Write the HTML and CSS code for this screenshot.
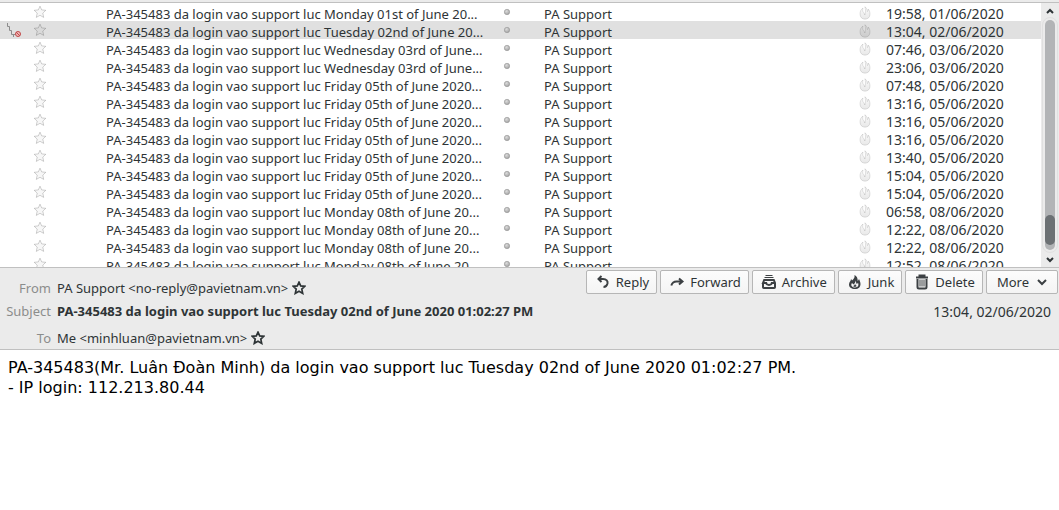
FILE: index.html
```html
<!DOCTYPE html>
<html lang="vi">
<head>
    <meta charset="UTF-8">
    <title>Mail</title>
    <link rel="stylesheet" href="styles.css">
</head>

<body>
    <svg class="defs" aria-hidden="true">
        <defs>
            <linearGradient id="flame-fill" x1="0" y1="0" x2="0" y2="1">
                <stop offset="0" stop-color="#000" stop-opacity="0.02" />
                <stop offset="1" stop-color="#000" stop-opacity="0.09" />
            </linearGradient>
            <radialGradient id="dot-fill" cx="0.4" cy="0.35" r="0.65">
                <stop offset="0" stop-color="#dcdcdc" />
                <stop offset="1" stop-color="#a2a2a2" />
            </radialGradient>
        </defs>
        <symbol id="star" viewBox="0 0 14 14">
            <path d="M7 1.2 8.700 4.900 12.800 5.300 9.800 8.100 10.700 12.400 7 10.300 3.300 12.400 4.200 8.100 1.200 5.300 5.300 4.900Z" />
        </symbol>
        <symbol id="flame" viewBox="0 0 12 14">
            <path d="M4 2C1.800 3.500 1 5.500 1 8 1 11.200 3.200 13.200 6 13.200 9 13.200 11 11.200 11 8 11 5.800 10.300 4 9.200 3 9.300 4.200 9 5 8.400 5.600 8.300 3.500 7.500 1.600 5.800.8 6.600 3 6.500 5 6.200 7L5.800 9C5.400 7.500 4.800 7 4.200 6.200 3.600 5 3.600 3.500 4 2Z" />
        </symbol>
    </svg>

    <div class="toolbar-edge"></div>
    <div class="thread-pane">
        <div class="thread-list">
            <table>
                <colgroup>
                    <col class="col-thread"><col class="col-star"><col class="col-attach"><col class="col-subject">
                    <col class="col-read"><col class="col-from"><col class="col-junk"><col class="col-date">
                </colgroup>
                <tbody id="rows"></tbody>
            </table>
        </div>
        <div class="scrollbar">
            <button class="scroll-button" aria-label="Scroll up"><svg viewBox="0 0 8 6"><path d="M1 5 4 2 7 5" /></svg></button>
            <div class="track"><div class="thumb"></div></div>
            <button class="scroll-button" aria-label="Scroll down"><svg viewBox="0 0 8 6"><path d="M1 1 4 4 7 1" /></svg></button>
        </div>
    </div>

    <div class="message-header">
        <div class="actions">
            <button><svg class="icon line" viewBox="0 0 16 16"><path d="M6.500 2 3.500 5 6.500 8M3.500 5H8C11.500 5 13 7 12.500 9.500 12 11.500 10.500 13 8.500 13" /></svg>Reply</button>
            <button><svg class="icon line" viewBox="0 0 16 16"><path d="M10 4.500 13.500 7.500 10 10.500M13 7.500H7.500C4.500 7.500 3 9.300 2.300 11.500" /></svg>Forward</button>
            <button><svg class="icon line" viewBox="0 0 16 16"><path class="thin" d="M4.500 1.500H11.500M3.500 3.500H12.500" /><path d="M2 9V13.200Q2 14 2.800 14H13.200Q14 14 14 13.200V9L12.800 6H3.200L2 9H5.200C5.500 11.500 10.500 11.500 10.800 9H14" /></svg>Archive</button>
            <button><svg class="icon line" viewBox="0 0 16 16"><path class="solid" fill-rule="evenodd" d="M7.500 1C8 4 6.500 5 5 6.500 4.800 5.800 4.600 5.500 4 5 4.200 7 2 8 2 10.500 2 13.300 4.500 15 8 15 11.500 15 13.500 13 13.500 10 13.500 7.500 12.500 6.500 12 5 11.500 6 11.200 6.500 10.700 7 10.800 4 9.800 2 7.500 1ZM8.500 6.500C9 8.500 9.500 9 9.800 10.300L11 8.800C12 11.500 11 13.500 8 13.500 4.500 13.500 3.500 11 5 9L6.500 10.500C7.500 9.500 8.500 8.500 8.500 6.500Z" /><path class="solid" d="M8 9.500C8.200 10.800 9 11.200 9.800 12L8 13 6 12.200C7 11.500 7.800 11 8 9.500Z" /></svg>Junk</button>
            <button><svg class="icon line" viewBox="0 0 16 16"><path d="M2 3.500H14M5.500 3V1.500H10.500V3M3.500 5V13Q3.500 14.500 5 14.500H11Q12.500 14.500 12.500 13V5" /><path class="thin" d="M6 5.500V12.500M8 5.500V12.500M10 5.500V12.500" /></svg>Delete</button>
            <button class="more">More<svg class="chevron line" viewBox="0 0 10 8"><path d="M1 2 5 6 9 2" /></svg></button>
        </div>
        <div class="field from">
            <span class="label">From</span>
            <span>PA Support &lt;no-reply@pavietnam.vn&gt;</span>
            <button class="contact-star" aria-label="Add to contacts"><svg><use href="#star" /></svg></button>
        </div>
        <div class="field">
            <span class="label">Subject</span>
            <strong>PA-345483 da login vao support luc Tuesday 02nd of June 2020 01:02:27 PM</strong>
            <time>13:04, 02/06/2020</time>
        </div>
        <div class="field to">
            <span class="label">To</span>
            <span>Me &lt;minhluan@pavietnam.vn&gt;</span>
            <button class="contact-star" aria-label="Add to contacts"><svg><use href="#star" /></svg></button>
        </div>
    </div>

    <div class="message-body">
        PA-345483(Mr. Luân Đoàn Minh) da login vao support luc Tuesday 02nd of June 2020 01:02:27 PM.<br>
        - IP login: 112.213.80.44
    </div>
    <script src="script.js"></script>
</body>
</html>
```

FILE: styles.css
```css
body {
    font-family: "Noto Sans", sans-serif;
    font-size: 13px;
    color: #2e3436;
    background-color: #fff;
    margin: 0;
}

button {
    display: block;
    font: inherit;
    color: inherit;
    padding: 0;
    border: none;
    background: none;
}

svg {
    display: block;
    fill: none;
}

.defs {
    position: absolute;
    width: 0;
    height: 0;
}

.toolbar-edge {
    height: 2px;
    background-color: #ebebeb;
    border-bottom: 1px solid #c0c0c0;
}

/* message list */
.thread-pane {
    display: flex;
    height: 264px;
}

.thread-list {
    flex: 1;
    overflow: hidden;
}

table {
    width: 100%;
    table-layout: fixed;
    border-collapse: collapse;
}

.col-thread { width: 28px; }
.col-star { width: 24px; }
.col-attach { width: 54px; }
.col-subject { width: 392px; }
.col-read { width: 46px; }
.col-junk { width: 27px; }
.col-date { width: 155px; }

td {
    height: 18px;
    padding: 0;
    vertical-align: top;
    white-space: nowrap;
}

td .text {
    display: block;
    height: 18px;
    line-height: 22px;
}

td .date,
.field time {
    font-size: 14px;
}

.selected {
    background-color: #e0e0e0;
}

.thread-icon {
    width: 16px;
    height: 16px;
    margin: 1px 0 0 6px;
}

.row-star svg {
    width: 14px;
    height: 14px;
    margin: 2px 5px 0;
    stroke: rgba(0, 0, 0, 0.18);
    fill: rgba(0, 0, 0, 0.03);
}

.row-dot svg {
    width: 8px;
    height: 8px;
    margin: 5px 5px 0;
}

.row-junk svg {
    width: 12px;
    height: 14px;
    margin-top: 3px;
    fill: url(#flame-fill);
    stroke: rgba(0, 0, 0, 0.14);
    stroke-width: 0.8;
}

/* scrollbar */
.scrollbar {
    display: flex;
    flex-direction: column;
    width: 18px;
    background-color: #ebebeb;
}

.scroll-button {
    display: flex;
    justify-content: center;
    align-items: center;
    height: 15px;
}

.scroll-button svg {
    width: 8px;
    height: 6px;
    stroke: #2e3436;
    stroke-width: 2;
}

.track {
    display: flex;
    align-items: flex-end;
    flex: 1;
    width: 10px;
    margin: 2px auto;
    padding-bottom: 5px;
    box-sizing: border-box;
    border-radius: 5px;
    background-color: #b2b4b6;
    outline: 1px solid #e0e0e0;
    outline-offset: 2px;
}

.thumb {
    width: 10px;
    height: 30px;
    border-radius: 5px;
    background-color: #6c7174;
}

/* message header */
.message-header {
    position: relative;
    background-color: #ebebeb;
    border-top: 1px solid #c0c0c0;
    border-bottom: 1px solid #c0c0c0;
    padding: 11px 8px 2px 6px;
}

.actions {
    position: absolute;
    top: 2px;
    right: 1px;
    display: flex;
    gap: 3px;
}

.actions button {
    display: flex;
    align-items: center;
    gap: 5px;
    height: 24px;
    box-sizing: border-box;
    padding: 0 7px 0 8px;
    border: 1px solid #b6b6b6;
    border-radius: 2px;
    background-image: linear-gradient(#fcfcfc, #f4f4f4);
}

.actions .more {
    gap: 8px;
    padding: 0 10px;
}

.icon {
    width: 16px;
    height: 16px;
}

.chevron {
    width: 10px;
    height: 8px;
}

.line {
    stroke: #3c4043;
    stroke-width: 2;
}

.thin {
    stroke-width: 1;
}

.solid {
    fill: #3c4043;
    stroke: none;
}

.field {
    display: flex;
    align-items: center;
    height: 18px;
    margin-bottom: 5px;
}

.field.to {
    margin: 9px 0 0;
}

.label {
    width: 45px;
    margin-right: 6px;
    text-align: right;
    color: #8b8d8c;
}

.field time {
    margin-left: auto;
}

.contact-star {
    margin-left: 4px;
}

.contact-star svg {
    width: 14px;
    height: 14px;
    stroke: #2e3436;
    stroke-width: 1.7;
}

/* message text */
.message-body {
    font-family: "DejaVu Sans", sans-serif;
    font-size: 16px;
    line-height: 20px;
    color: #000;
    padding: 8px;
}
```

FILE: script.js
```js
const messages = [
    ['Monday 01st of June 20...', '19:58, 01/06/2020'],
    ['Tuesday 02nd of June 20...', '13:04, 02/06/2020'],
    ['Wednesday 03rd of June...', '07:46, 03/06/2020'],
    ['Wednesday 03rd of June...', '23:06, 03/06/2020'],
    ['Friday 05th of June 2020...', '07:48, 05/06/2020'],
    ['Friday 05th of June 2020...', '13:16, 05/06/2020'],
    ['Friday 05th of June 2020...', '13:16, 05/06/2020'],
    ['Friday 05th of June 2020...', '13:16, 05/06/2020'],
    ['Friday 05th of June 2020...', '13:40, 05/06/2020'],
    ['Friday 05th of June 2020...', '15:04, 05/06/2020'],
    ['Friday 05th of June 2020...', '15:04, 05/06/2020'],
    ['Monday 08th of June 20...', '06:58, 08/06/2020'],
    ['Monday 08th of June 20...', '12:22, 08/06/2020'],
    ['Monday 08th of June 20...', '12:22, 08/06/2020'],
    ['Monday 08th of June 20...', '12:52, 08/06/2020']
];
const selected = 1;

const threadIcon = `<svg class="thread-icon" viewBox="0 0 16 16">
    <path d="M1.500 1V4.500H3.500V8.500H5.500V12.500H9M7.500 12V15" stroke="#8c8c8c" />
    <circle cx="12" cy="12" r="2.500" fill="#f0b8b8" stroke="#c04848" /><path d="M10.200 10.200 13.800 13.800" stroke="#c04848" /></svg>`;

document.getElementById('rows').innerHTML = messages.map(([subject, date], i) => `
    <tr class="${i === selected ? 'selected' : ''}">
        <td>${i === selected ? threadIcon : ''}</td>
        <td><button class="row-star" aria-label="Star"><svg><use href="#star" /></svg></button></td>
        <td></td>
        <td><span class="text">PA-345483 da login vao support luc ${subject}</span></td>
        <td><button class="row-dot" aria-label="Mark as unread"><svg viewBox="0 0 8 8"><circle cx="4" cy="4" r="2.700" fill="url(#dot-fill)" stroke="#999" stroke-width="0.600" /></svg></button></td>
        <td><span class="text">PA Support</span></td>
        <td><button class="row-junk" aria-label="Mark as junk"><svg><use href="#flame" /></svg></button></td>
        <td><span class="text date">${date}</span></td>
    </tr>`).join('');
```
